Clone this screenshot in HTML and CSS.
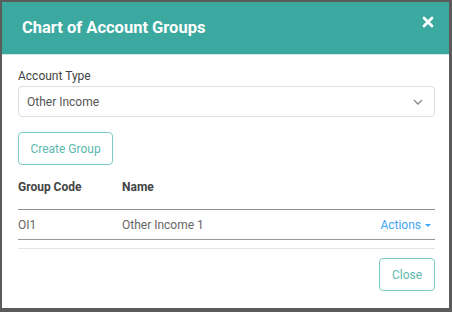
FILE: index.html
```html
<!DOCTYPE html>
<html lang="en">
<head>
  <meta charset="UTF-8">
  <title>Chart of Account Groups</title>
  <link rel="stylesheet" href="styles.css">
</head>
<body>
  <div class="modal">
    <div class="modal-header">
      <h2>Chart of Account Groups</h2>
      <span class="close-x">
        <svg width="12" height="12" viewBox="0 0 12 12"><path d="M2 2 L10 10 M10 2 L2 10" stroke="#fff" stroke-width="2.8" stroke-linecap="round"/></svg>
      </span>
    </div>

    <div class="modal-body">
      <label class="field-label">Account Type</label>
      <div class="select">
        <span>Other Income</span>
        <svg width="10" height="6" viewBox="0 0 10 6"><path d="M1 1 L5 5 L9 1" fill="none" stroke="#888" stroke-width="1.3"/></svg>
      </div>

      <button class="btn-outline create">Create Group</button>

      <table class="groups">
        <thead>
          <tr><th class="code">Group Code</th><th>Name</th><th></th></tr>
        </thead>
        <tbody>
          <tr>
            <td class="code">OI1</td>
            <td>Other Income 1</td>
            <td class="actions">Actions <span class="caret"></span></td>
          </tr>
        </tbody>
      </table>
    </div>

    <div class="modal-footer">
      <button class="btn-outline">Close</button>
    </div>
  </div>
</body>
</html>
```

FILE: styles.css
```css
html, body {
  margin: 0;
  height: 312px;
}
body {
  box-sizing: border-box;
  background: #5b5b5b;
  padding: 2px 3px 4px 2px;
  font-family: Roboto, "Liberation Sans", sans-serif;
  font-size: 12px;
  color: #555;
}
.modal {
  background: #fff;
  height: 306px;
  display: flex;
  flex-direction: column;
}
.modal-header {
  height: 52px;
  background: #3ba99f;
  border-bottom: 1px solid #cde9e6;
  display: flex;
  align-items: center;
  justify-content: space-between;
  padding: 0 15px 0 20px;
}
.modal-header h2 {
  margin: 0 0 1px;
  color: #fff;
  font-size: 16.5px;
  font-weight: 700;
}
.close-x {
  align-self: flex-start;
  margin-top: 14px;
  height: 12px;
}
.close-x svg { display: block; }
.modal-body {
  padding: 14px 14px 0 16px;
}
.field-label {
  display: block;
  color: #444;
  line-height: 14px;
  margin-bottom: 3px;
}
.select {
  height: 31px;
  box-sizing: border-box;
  border: 1px solid #ddd;
  border-radius: 4px;
  display: flex;
  align-items: center;
  justify-content: space-between;
  padding: 0 11px 0 8px;
  color: #555;
}
.btn-outline {
  font-family: inherit;
  font-size: 12px;
  color: #5cb8af;
  background: #fff;
  border: 1.5px solid #7fccc4;
  border-radius: 4px;
  padding: 0;
  height: 33px;
}
.create {
  margin-top: 15px;
  width: 95px;
  display: block;
}
.groups {
  width: 100%;
  border-collapse: collapse;
}
.groups th {
  height: 44px;
  text-align: left;
  font-weight: 700;
  color: #444;
  padding: 0;
  border-bottom: 1px solid #909090;
}
.groups td {
  height: 29px;
  padding: 0;
  color: #666;
  border-bottom: 1px solid #9a9a9a;
}
.groups .code { width: 104px; }
.groups .actions {
  text-align: right;
  color: #42a5f5;
  padding-right: 4px;
}
.caret {
  display: inline-block;
  border-left: 3px solid transparent;
  border-right: 3px solid transparent;
  border-top: 3px solid #42a5f5;
  vertical-align: middle;
  margin-left: 1px;
}
.modal-footer {
  margin: 8px 14px 0 16px;
  border-top: 1px solid #e3e3e3;
  padding-top: 9px;
  display: flex;
  justify-content: flex-end;
}
.modal-footer .btn-outline {
  width: 56px;
}
```
